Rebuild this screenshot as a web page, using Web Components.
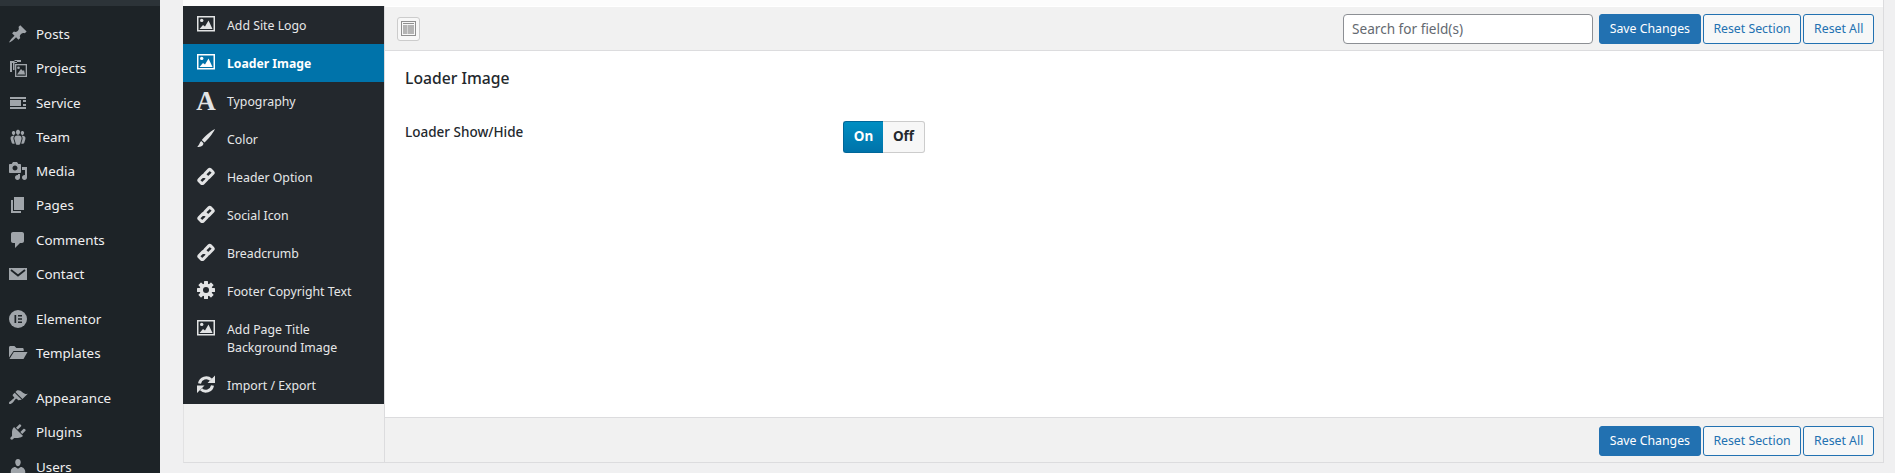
<!DOCTYPE html>
<html lang="en">
<head>
<meta charset="utf-8">
<title>Loader Image</title>
<style>
  html, body { margin: 0; height: 473px; overflow: hidden; background: #f0f0f1; }
  body { font-family: "Noto Sans", "Open Sans", sans-serif; }
</style>
</head>
<body>
<options-page>
  <admin-menu slot="menu">
    <admin-item icon="pin">Posts</admin-item>
    <admin-item icon="projects">Projects</admin-item>
    <admin-item icon="service">Service</admin-item>
    <admin-item icon="team">Team</admin-item>
    <admin-item icon="media">Media</admin-item>
    <admin-item icon="pages">Pages</admin-item>
    <admin-item icon="comments">Comments</admin-item>
    <admin-item icon="contact">Contact</admin-item>
    <admin-item icon="elementor" separated>Elementor</admin-item>
    <admin-item icon="templates">Templates</admin-item>
    <admin-item icon="appearance" separated>Appearance</admin-item>
    <admin-item icon="plugins">Plugins</admin-item>
    <admin-item icon="users">Users</admin-item>
  </admin-menu>

  <options-panel>
    <panel-tab slot="tabs" icon="picture">Add Site Logo</panel-tab>
    <panel-tab slot="tabs" icon="picture" active>Loader Image</panel-tab>
    <panel-tab slot="tabs" icon="font">Typography</panel-tab>
    <panel-tab slot="tabs" icon="brush">Color</panel-tab>
    <panel-tab slot="tabs" icon="link">Header Option</panel-tab>
    <panel-tab slot="tabs" icon="link">Social Icon</panel-tab>
    <panel-tab slot="tabs" icon="link">Breadcrumb</panel-tab>
    <panel-tab slot="tabs" icon="cog">Footer Copyright Text</panel-tab>
    <panel-tab slot="tabs" icon="picture">Add Page Title<br>Background Image</panel-tab>
    <panel-tab slot="tabs" icon="refresh">Import / Export</panel-tab>

    <panel-bar slot="header" position="top">
      <layout-button slot="start"></layout-button>
      <search-box>Search for field(s)</search-box>
      <panel-button primary>Save Changes</panel-button>
      <panel-button>Reset Section</panel-button>
      <panel-button>Reset All</panel-button>
    </panel-bar>

    <options-section heading="Loader Image">
      <option-row label="Loader Show/Hide">
        <on-off-switch></on-off-switch>
      </option-row>
    </options-section>

    <panel-bar slot="footer" position="bottom">
      <panel-button primary>Save Changes</panel-button>
      <panel-button>Reset Section</panel-button>
      <panel-button>Reset All</panel-button>
    </panel-bar>
  </options-panel>
</options-page>

<script>
const MENU_ICONS = {
  pin: '<path d="M10.44 3.02l1.82-1.82 6.36 6.35-1.83 1.82c-1.05-.68-2.48-.57-3.41.36l-.75.75c-.92.93-1.04 2.35-.35 3.41l-1.83 1.82-2.41-2.41-2.8 2.79c-.42.42-3.38 2.71-3.8 2.29s1.86-3.39 2.28-3.81l2.79-2.79L4.1 9.36l1.83-1.82c1.05.69 2.48.57 3.4-.36l.75-.75c.93-.92 1.05-2.35.36-3.41z"/>',
  projects: '<path d="M2 5h7V3H2zM2 5v9h2V5zM5 2h8v2H5zM5 2v10h1.500V2zM7 6h12v13H7z"/><path d="M8.300 7.300h9.400v10.400H8.300z" fill="#1d2327"/><circle cx="10.500" cy="9.800" r="1.300"/><path d="M9 16.500l4-5.500 2 2 1-1 1 4.500z"/>',
  service: '<path d="M2 4h16v2H2zM2 7h11v6H2zM15 7h3v2h-3zM15 11h3v2h-3zM2 14h16v2H2z"/>',
  team: '<path d="M8.030 4.460c-.29 1.280.55 3.460 1.970 3.460 1.410 0 2.250-2.180 1.960-3.460-.22-.98-1.080-1.630-1.960-1.630-.89 0-1.740.65-1.970 1.630zm-4.130.9c-.25 1.080.47 2.930 1.670 2.930s1.920-1.850 1.670-2.930c-.19-.83-.92-1.390-1.670-1.390s-1.480.56-1.670 1.390zm8.860 0c-.25 1.080.47 2.930 1.660 2.930 1.200 0 1.920-1.850 1.670-2.930-.19-.83-.92-1.390-1.670-1.390-.74 0-1.470.56-1.660 1.390zm-.59 11.430l1.250-4.300C14.200 10 12.710 8.470 10 8.470c-2.720 0-4.210 1.530-3.440 4.020l1.260 4.300C8.050 17.510 9 18 10 18c.98 0 1.940-.49 2.170-1.210zm-6.100-7.630c-.49.67-.96 1.830-.42 3.590l1.120 3.790c-.34.2-.77.31-1.200.31-.85 0-1.650-.41-1.850-1.030l-1.070-3.650c-.65-2.110.61-3.400 2.920-3.400.27 0 .54.02.79.06-.1.1-.2.22-.29.33zm8.350-.39c2.310 0 3.580 1.290 2.920 3.400l-1.070 3.650c-.2.62-1 1.030-1.850 1.030-.43 0-.86-.11-1.200-.31l1.110-3.770c.55-1.780.08-2.940-.42-3.610-.08-.11-.18-.23-.28-.33.25-.04.51-.06.79-.06z"/>',
  media: '<path d="M13 11V4c0-.55-.45-1-1-1h-1.670L9 1H5L3.670 3H2c-.55 0-1 .45-1 1v7c0 .55.45 1 1 1h10c.55 0 1-.45 1-1zM7 4.500c1.380 0 2.500 1.120 2.500 2.500S8.380 9.500 7 9.500 4.500 8.380 4.500 7 5.620 4.500 7 4.500zM14 6h5v10.500c0 1.380-1.120 2.500-2.500 2.500S14 17.880 14 16.500s1.120-2.500 2.500-2.500c.17 0 .34.02.5.05V9h-3V6zm-4 8.050V13h2v3.500c0 1.380-1.120 2.500-2.500 2.500S7 17.880 7 16.500 8.120 14 9.500 14c.17 0 .34.02.5.05z"/>',
  pages: '<path d="M6 15V2h10v13H6zm-1 1h8v2H3V5h2v11z"/>',
  comments: '<path d="M5 2h9c1.100 0 2 .9 2 2v7c0 1.100-.9 2-2 2h-2l-5 5v-5H5c-1.100 0-2-.9-2-2V4c0-1.100.9-2 2-2z"/>',
  contact: '<path d="M1 4h18v12H1z"/><path d="M3 6l7 5.500L17 6" fill="none" stroke="#1d2327" stroke-width="1.800"/>',
  elementor: '<circle cx="10" cy="10" r="9"/><path d="M6.500 6h1.700v8H6.500zM10 6h4v1.500h-4zM10 9.250h4v1.500h-4zM10 12.500h4V14h-4z" fill="#1d2327"/>',
  templates: '<path d="M1 4.500C1 3.700 1.600 3 2.400 3h4l2 2h6c.8 0 1.300.6 1.300 1.300V8H5.500L1 14.500z"/><path d="M5.800 9H19.500L15.500 16H1.500z"/>',
  appearance: '<path d="M14.480 11.060L7.410 3.990l1.500-1.500c.5-.56 2.300-.47 3.510.32 1.210.8 1.430 1.280 2.910 2.100 1.180.64 2.450 1.260 4.450.85zm-.71.71L6.700 4.700 4.930 6.470c-.39.39-.39 1.020 0 1.410l1.060 1.060c.39.39.39 1.030 0 1.420-.6.6-1.430 1.110-2.210 1.690-.35.26-.7.53-1.010.84C1.430 13.230.4 14.960 1.200 15.760c.79.79 2.520-.24 3.850-1.580.3-.3.58-.66.84-1.010.58-.78 1.090-1.610 1.690-2.210.39-.39 1.020-.39 1.410 0l1.060 1.060c.39.39 1.020.39 1.410 0z"/>',
  plugins: '<path d="M13.110 4.360L9.870 7.600 8 5.730l3.240-3.240c.35-.34 1.050-.2 1.560.32.52.51.66 1.210.31 1.550zm-8 1.770l.91-1.120 9.010 9.010-1.190.84c-.71.71-2.630 1.160-3.820 1.160H6.140L4.900 17.260c-.59.59-1.540.59-2.120 0-.59-.58-.59-1.530 0-2.120l1.240-1.240v-3.880c0-1.130.4-3.190 1.090-3.890zm7.260 3.970l3.240-3.240c.34-.35 1.040-.21 1.550.31.52.51.66 1.210.31 1.550l-3.240 3.250z"/>',
  users: '<path d="M10 9.250c-2.270 0-2.730-3.440-2.730-3.440C7 4.020 7.820 2 9.970 2c2.160 0 2.980 2.020 2.710 3.810 0 0-.41 3.440-2.680 3.440zm0 2.570L12.720 10c2.390 0 4.520 2.330 4.520 4.530v2.490s-3.650 1.130-7.240 1.130c-3.650 0-7.240-1.130-7.240-1.130v-2.490c0-2.250 1.940-4.480 4.470-4.480z"/>'
};

const cogTeeth = [0, 45, 90, 135, 180, 225, 270, 315]
  .map(a => `<rect x="7" y="0" width="4" height="5" rx=".6" transform="rotate(${a} 9 9)"/>`).join('');

const TAB_ICONS = {
  picture: '<path fill-rule="evenodd" d="M0 1h18v15.500H0zM1.500 2.500v12.500h15V2.500z"/><circle cx="4.700" cy="5.400" r="1.700"/><path d="M2.500 14l3.500-4 2 1.500L11.500 5.500 15.500 14z"/>',
  brush: '<path d="M18 0C13 2.500 7.500 7.500 4.800 11L7.500 13.500C11 10.500 15.500 5 18 0zM4.200 12C2.800 12.800 2.800 15.500 .2 18 4 18 6.800 16.800 6.300 14z"/>',
  link: '<g transform="rotate(-45 9 9.500)" fill="none" stroke="currentColor" stroke-width="3"><rect x="1" y="6.800" width="7.500" height="5.400" rx="1"/><rect x="9.500" y="6.800" width="7.500" height="5.400" rx="1"/></g>',
  cog: `<g>${cogTeeth}</g><circle cx="9" cy="9" r="6.500"/><circle cx="9" cy="9" r="3" fill="var(--tab-bg)"/>`,
  refresh: '<g fill="none" stroke="currentColor" stroke-width="3"><path d="M2.500 8.500A6.800 6.800 0 0 1 14 4.800"/><path d="M15.500 10.500A6.800 6.800 0 0 1 4 14.200"/></g><path d="M18 .5v7.500h-7.500zM0 18v-7.500h7.500z"/>'
};

// left admin column
class AdminMenu extends HTMLElement {
  connectedCallback() {
    this.attachShadow({ mode: 'open' });
    this.shadowRoot.innerHTML = `
      <style>
        :host { display: block; background: #1d2327; height: 473px; overflow: hidden; }
        .strip { height: 6px; background: #2c3338; }
        .list { padding-top: 10.85px; display: flex; flex-direction: column; }
      </style>
      <div class="strip"></div>
      <div class="list"><slot></slot></div>
    `;
  }
}

class AdminItem extends HTMLElement {
  connectedCallback() {
    this.attachShadow({ mode: 'open' });
    this.shadowRoot.innerHTML = `
      <style>
        :host {
          display: flex;
          align-items: center;
          height: 34.29px;
          padding-left: 8px;
          color: #f0f0f1;
          font-size: 13.4px;
          flex: none;
        }
        :host([separated]) { margin-top: 10.6px; }
        svg { width: 20px; height: 20px; color: #a0a5aa; fill: currentColor; margin-right: 8px; flex: none; }
      </style>
      <svg viewBox="0 0 20 20">${MENU_ICONS[this.getAttribute('icon')]}</svg>
      <slot></slot>
    `;
  }
}

class OptionsPage extends HTMLElement {
  connectedCallback() {
    this.attachShadow({ mode: 'open' });
    this.shadowRoot.innerHTML = `
      <style>
        :host { display: grid; grid-template-columns: 160px 1fr; height: 473px; column-gap: 23px; padding-right: 11px; }
      </style>
      <slot name="menu"></slot>
      <slot></slot>
    `;
  }
}

class OptionsPanel extends HTMLElement {
  connectedCallback() {
    this.attachShadow({ mode: 'open' });
    this.shadowRoot.innerHTML = `
      <style>
        :host {
          display: grid;
          grid-template-columns: 201px 1fr;
          grid-template-rows: 6px 1fr;
          height: 463px;
          box-sizing: border-box;
          background: #f1f1f1;
          border: 1px solid #dcdcde;
          border-top: 0;
          border-left-color: #e2e2e3;
        }
        .top { grid-column: 1 / 3; background: #fcfcfc; margin-left: -1px; }
        .tabs { margin-left: -1px; min-height: 0; }
        .tabs-list { background: #23282d; display: flex; flex-direction: column; }
        .main { display: flex; flex-direction: column; min-width: 0; min-height: 0; background: #fff; border-left: 1px solid #dcdcde; margin-left: -1px; }
        .grow { flex: 1; }
      </style>
      <div class="top"></div>
      <div class="tabs"><div class="tabs-list"><slot name="tabs"></slot></div></div>
      <div class="main">
        <slot name="header"></slot>
        <div class="grow"><slot></slot></div>
        <slot name="footer"></slot>
      </div>
    `;
  }
}

class PanelTab extends HTMLElement {
  connectedCallback() {
    const icon = this.getAttribute('icon');
    const glyph = icon === 'font'
      ? '<span class="font-glyph">A</span>'
      : `<svg viewBox="0 0 18 18">${TAB_ICONS[icon]}</svg>`;
    this.attachShadow({ mode: 'open' });
    this.shadowRoot.innerHTML = `
      <style>
        :host {
          --tab-bg: #23282d;
          display: flex;
          align-items: flex-start;
          padding: 10px 14px 9px;
          background: var(--tab-bg);
          color: #e6e7e8;
          font-size: 12.3px;
          line-height: 18px;
        }
        :host([active]) { --tab-bg: #0073aa; color: #fff; font-weight: 700; font-size: 12.2px; }
        .icon { width: 18px; height: 18px; margin: -1px 12px 0 0; flex: none; display: flex; justify-content: center; }
        .label { padding-top: 1px; }
        svg { width: 18px; height: 18px; fill: currentColor; color: #e2e3e4; }
        :host([active]) svg { color: #fff; }
        .font-glyph { font: 700 27px/18px "Liberation Serif", serif; color: #e2e3e4; margin-top: 1px; }
      </style>
      <span class="icon">${glyph}</span>
      <span class="label"><slot></slot></span>
    `;
  }
}

class PanelBar extends HTMLElement {
  connectedCallback() {
    this.attachShadow({ mode: 'open' });
    this.shadowRoot.innerHTML = `
      <style>
        :host {
          display: flex;
          align-items: center;
          box-sizing: border-box;
          background: #f1f1f1;
          padding: 0 9px 0 12px;
          gap: 2px;
          flex: none;
        }
        :host([position="top"]) { height: 44px; margin-top: 1px; border-bottom: 1px solid #dcdcde; }
        :host([position="bottom"]) { height: 45px; border-top: 1px solid #dcdcde; padding-top: 1px; }
        .start { margin-right: auto; display: flex; }
      </style>
      <div class="start"><slot name="start"></slot></div>
      <slot></slot>
    `;
  }
}

class LayoutButton extends HTMLElement {
  connectedCallback() {
    this.attachShadow({ mode: 'open' });
    this.shadowRoot.innerHTML = `
      <style>
        :host {
          display: flex; align-items: center; justify-content: center;
          width: 23px; height: 24px; box-sizing: border-box;
          background: #f7f7f7; border: 1px solid #ccc; border-radius: 3px;
        }
      </style>
      <svg width="15" height="15" viewBox="0 0 15 15">
        <rect x=".5" y=".5" width="14" height="14" fill="none" stroke="#8f8f8f"/>
        <rect x="2" y="2" width="11" height="1" fill="#8f8f8f"/>
        <rect x="2" y="4" width="11" height="9" fill="#b4b4b4"/>
        <rect x="6" y="4" width="1" height="9" fill="#d4d4d4"/>
      </svg>
    `;
  }
}

class SearchBox extends HTMLElement {
  connectedCallback() {
    this.attachShadow({ mode: 'open' });
    this.shadowRoot.innerHTML = `
      <style>
        :host {
          display: flex; align-items: center;
          width: 250px; height: 30px; box-sizing: border-box;
          margin-right: 4px; padding: 0 8px;
          background: #fff; border: 1px solid #8c8f94; border-radius: 4px;
          color: #646970; font-size: 13.6px;
        }
      </style>
      <slot></slot>
    `;
  }
}

class PanelButton extends HTMLElement {
  connectedCallback() {
    this.attachShadow({ mode: 'open' });
    this.shadowRoot.innerHTML = `
      <style>
        :host {
          display: flex; align-items: center; justify-content: center;
          height: 30px; box-sizing: border-box; padding: 0 9.7px;
          background: #f6f7f7; border: 1px solid #2271b1; border-radius: 3px;
          color: #2271b1; font-size: 12.3px; white-space: nowrap;
        }
        :host([primary]) { background: #2271b1; color: #fff; }
      </style>
      <slot></slot>
    `;
  }
}

class OptionsSection extends HTMLElement {
  connectedCallback() {
    this.attachShadow({ mode: 'open' });
    this.shadowRoot.innerHTML = `
      <style>
        :host { display: block; padding: 16px 20px 0; color: #23282d; }
        h2 { margin: 0 0 32px; font-size: 15.7px; font-weight: 500; line-height: 22px; }
      </style>
      <h2>${this.getAttribute('heading')}</h2>
      <slot></slot>
    `;
  }
}

class OptionRow extends HTMLElement {
  connectedCallback() {
    this.attachShadow({ mode: 'open' });
    this.shadowRoot.innerHTML = `
      <style>
        :host { display: grid; grid-template-columns: 438px 1fr; align-items: start; }
        .label { font-size: 13.5px; font-weight: 500; line-height: 22px; color: #23282d; }
      </style>
      <div class="label">${this.getAttribute('label')}</div>
      <div><slot></slot></div>
    `;
  }
}

class OnOffSwitch extends HTMLElement {
  connectedCallback() {
    this.attachShadow({ mode: 'open' });
    this.shadowRoot.innerHTML = `
      <style>
        :host { display: inline-flex; height: 32px; font-size: 13.5px; font-weight: 700; line-height: 1; }
        span { display: flex; align-items: center; justify-content: center; box-sizing: border-box; }
        .on { width: 40px; color: #fff; background: linear-gradient(#008ec2, #0073aa); border: 1px solid #006799; border-right: 0; border-radius: 3px 0 0 3px; }
        .off { width: 42px; color: #23282d; background: #f7f7f7; border: 1px solid #ccc; border-left: 0; border-radius: 0 3px 3px 0; }
      </style>
      <span class="on">On</span><span class="off">Off</span>
    `;
  }
}

customElements.define('admin-menu', AdminMenu);
customElements.define('admin-item', AdminItem);
customElements.define('options-page', OptionsPage);
customElements.define('options-panel', OptionsPanel);
customElements.define('panel-tab', PanelTab);
customElements.define('panel-bar', PanelBar);
customElements.define('layout-button', LayoutButton);
customElements.define('search-box', SearchBox);
customElements.define('panel-button', PanelButton);
customElements.define('options-section', OptionsSection);
customElements.define('option-row', OptionRow);
customElements.define('on-off-switch', OnOffSwitch);
</script>
</body>
</html>
